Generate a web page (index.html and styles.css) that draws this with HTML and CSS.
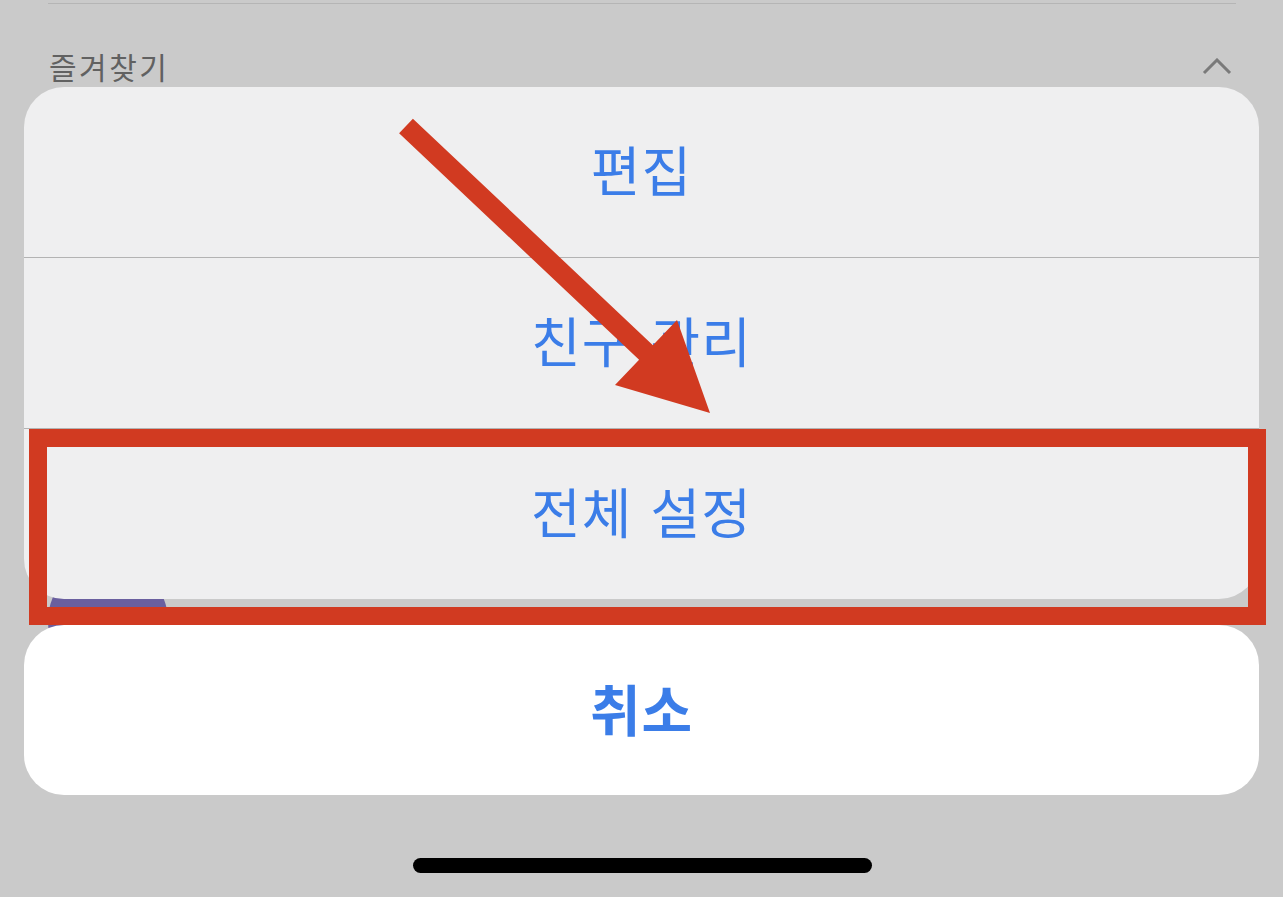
FILE: index.html
```html
<!DOCTYPE html>
<html lang="ko">
<head>
  <meta charset="UTF-8" />
  <meta name="viewport" content="width=device-width, initial-scale=1.0"/>
  <title>친구 설정</title>
  <link rel="stylesheet" href="styles.css">
</head>
<body>
  <div class="screen">
    <!-- page behind the sheet -->
    <div class="backdrop">
      <div class="rule"></div>
      <div class="fav-head">
        <span class="fav-title">즐겨찾기</span>
        <svg class="chevron" width="30" height="18" viewBox="0 0 30 18">
          <polyline points="2,15 15,2 28,15" fill="none" stroke="#7a7a7a" stroke-width="3"/>
        </svg>
      </div>
      <div class="friend-row">
        <div class="avatar"></div>
      </div>
    </div>

    <!-- action sheet -->
    <div class="sheet-wrap">
      <div class="sheet">
        <button class="sheet-item">편집</button>
        <button class="sheet-item">친구 관리</button>
        <button class="sheet-item">전체 설정</button>
      </div>
      <button class="cancel-btn">취소</button>
      <div class="home-bar"></div>
    </div>

    <!-- annotation -->
    <svg class="markup" width="1283" height="897" viewBox="0 0 1283 897">
      <rect x="38" y="438" width="1219" height="178" fill="none" stroke="#d13a21" stroke-width="18"/>
      <polygon fill="#d13a21" points="412.9,118.7 652.9,345.2 677,320 710,413 615,385 639.1,359.8 399.1,133.3"/>
    </svg>
  </div>
</body>
</html>
```

FILE: styles.css
```css
body {
  margin: 0;
  background-color: #cacaca;
  font-family: "Noto Sans CJK KR", "Noto Sans", sans-serif;
}

.screen {
  position: relative;
  width: 1283px;
  height: 897px;
  overflow: hidden;
}

.backdrop {
  padding-top: 3px;
}

.rule {
  height: 1px;
  margin: 0 47px 0 48px;
  background-color: #b5b5b5;
}

.fav-head {
  display: flex;
  justify-content: space-between;
  align-items: center;
  margin: 44px 51px 0 49px;
  height: 36px;
}

.fav-title {
  font-size: 30px;
  line-height: 36px;
  letter-spacing: 2.5px;
  color: #616161;
}

.chevron {
  margin-top: 2px;
}

.friend-row {
  height: 562px;
  border-bottom: 1px solid #b3b3b3;
}

.avatar {
  width: 120px;
  height: 120px;
  margin: 477px 0 0 48px;
  border-radius: 50%;
  background-color: #6a5f9f;
}

.sheet-wrap {
  position: absolute;
  top: 87px;
  left: 24px;
  right: 24px;
  display: flex;
  flex-direction: column;
}

.sheet {
  display: flex;
  flex-direction: column;
  background-color: #efeff0;
  border-radius: 40px;
  overflow: hidden;
}

.sheet-item,
.cancel-btn {
  display: flex;
  justify-content: center;
  align-items: center;
  height: 171px;
  padding: 0 0 6px;
  border: none;
  background: none;
  font-family: inherit;
  font-size: 54px;
  line-height: 1;
  letter-spacing: 1px;
  word-spacing: 2px;
  color: #3b7de8;
}

.sheet-item:first-child {
  height: 170px;
}

.sheet-item + .sheet-item {
  border-top: 1px solid #b3b3b3;
}

.cancel-btn {
  margin-top: 26px;
  height: 170px;
  font-size: 55px;
  font-weight: bold;
  background-color: #ffffff;
  border-radius: 40px;
}

.home-bar {
  align-self: center;
  width: 459px;
  height: 15px;
  margin: 63px 0 0 2px;
  border-radius: 8px;
  background-color: #000000;
}

.markup {
  position: absolute;
  top: 0;
  left: 0;
}
```
